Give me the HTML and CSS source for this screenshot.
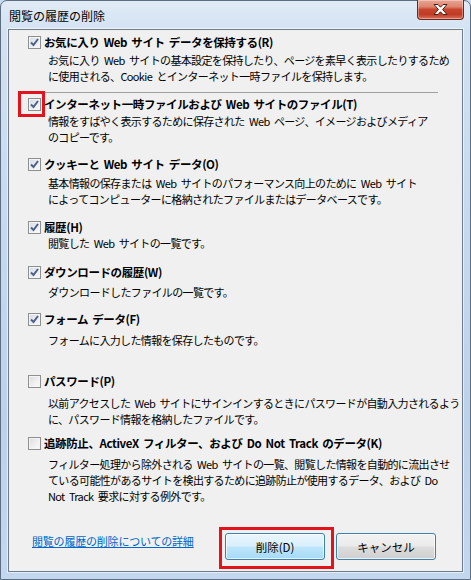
FILE: index.html
```html
<!DOCTYPE html>
<html lang="ja">
<head>
<meta charset="utf-8">
<title>閲覧の履歴の削除</title>
<link rel="stylesheet" href="styles.css">
</head>
<body>
<div class="window">
  <div class="titlebar">
    <span class="title">閲覧の履歴の削除</span>
    <button class="close" aria-label="閉じる">
      <svg width="15" height="11" viewBox="0 0 15 11"><path d="M1 0.5 H5 L7.5 3.2 L10 0.5 H14 L9.6 5.5 L14 10.5 H10 L7.5 7.8 L5 10.5 H1 L5.4 5.5 Z" fill="#ffffff" stroke="#4a1f18" stroke-width="1" stroke-linejoin="round"/></svg>
    </button>
  </div>
  <div class="panel">
    <div class="items">
      <div class="item item-fav">
        <div class="row"><span class="cb checked"><svg width="11" height="11" viewBox="0 0 11 11"><path d="M2 5.5 L4.5 8 L9 2" fill="none" stroke="#4c5f86" stroke-width="2"/></svg></span><span class="label">お気に入り Web サイト データを保持する(R)</span></div>
        <div class="desc desc-fav">お気に入り Web サイトの基本設定を保持したり、ページを素早く表示したりするため<br>に使用される、Cookie とインターネット一時ファイルを保持します。</div>
      </div>
      <div class="separator"></div>
      <div class="item item-temp">
        <div class="row"><span class="cb checked"><svg width="11" height="11" viewBox="0 0 11 11"><path d="M2 5.5 L4.5 8 L9 2" fill="none" stroke="#4c5f86" stroke-width="2"/></svg></span><span class="label">インターネット一時ファイルおよび Web サイトのファイル(T)</span></div>
        <div class="desc desc-temp">情報をすばやく表示するために保存された Web ページ、イメージおよびメディア<br>のコピーです。</div>
      </div>
      <div class="item item-cookie">
        <div class="row"><span class="cb checked"><svg width="11" height="11" viewBox="0 0 11 11"><path d="M2 5.5 L4.5 8 L9 2" fill="none" stroke="#4c5f86" stroke-width="2"/></svg></span><span class="label">クッキーと Web サイト データ(O)</span></div>
        <div class="desc desc-cookie">基本情報の保存または Web サイトのパフォーマンス向上のために Web サイト<br>によってコンピューターに格納されたファイルまたはデータベースです。</div>
      </div>
      <div class="item item-history">
        <div class="row"><span class="cb checked"><svg width="11" height="11" viewBox="0 0 11 11"><path d="M2 5.5 L4.5 8 L9 2" fill="none" stroke="#4c5f86" stroke-width="2"/></svg></span><span class="label">履歴(H)</span></div>
        <div class="desc desc-history">閲覧した Web サイトの一覧です。</div>
      </div>
      <div class="item item-download">
        <div class="row"><span class="cb checked"><svg width="11" height="11" viewBox="0 0 11 11"><path d="M2 5.5 L4.5 8 L9 2" fill="none" stroke="#4c5f86" stroke-width="2"/></svg></span><span class="label">ダウンロードの履歴(W)</span></div>
        <div class="desc desc-download">ダウンロードしたファイルの一覧です。</div>
      </div>
      <div class="item item-form">
        <div class="row"><span class="cb checked"><svg width="11" height="11" viewBox="0 0 11 11"><path d="M2 5.5 L4.5 8 L9 2" fill="none" stroke="#4c5f86" stroke-width="2"/></svg></span><span class="label">フォーム データ(F)</span></div>
        <div class="desc desc-form">フォームに入力した情報を保存したものです。</div>
      </div>
      <div class="item item-password">
        <div class="row"><span class="cb"></span><span class="label">パスワード(P)</span></div>
        <div class="desc desc-password">以前アクセスした Web サイトにサインインするときにパスワードが自動入力されるよう<br>に、パスワード情報を格納したファイルです。</div>
      </div>
      <div class="item item-tracking">
        <div class="row"><span class="cb"></span><span class="label">追跡防止、ActiveX フィルター、および Do Not Track のデータ(K)</span></div>
        <div class="desc desc-tracking">フィルター処理から除外される Web サイトの一覧、閲覧した情報を自動的に流出させ<br>ている可能性があるサイトを検出するために追跡防止が使用するデータ、および Do<br>Not Track 要求に対する例外です。</div>
      </div>
    </div>
    <div class="footer">
      <a class="link" href="#">閲覧の履歴の削除についての詳細</a>
      <div class="buttons">
        <button class="btn btn-primary">削除(D)</button>
        <button class="btn btn-default">キャンセル</button>
      </div>
    </div>
  </div>
  <div class="mark mark-check"></div>
  <div class="mark mark-button"></div>
</div>
</body>
</html>
```
FILE: styles.css
```css
* { box-sizing: border-box; }
html, body { margin: 0; padding: 0; }
body {
  width: 471px;
  height: 580px;
  background: #c9daee;
  font-family: "Noto Sans CJK JP", "Noto Sans", sans-serif;
  color: #000;
}
.window {
  position: relative;
  width: 471px;
  height: 580px;
  padding: 0 7px 7px 7px;
  border: 1px solid #5d6e82;
  border-radius: 7px 7px 0 0;
  background: linear-gradient(180deg, #e1ebf6 0px, #d3e2f2 30px, #c7daef 200px, #bcd2ea 420px, #c3d8ee 580px);
  display: flex;
  flex-direction: column;
}
.titlebar {
  height: 28px;
  display: flex;
  justify-content: space-between;
  align-items: flex-start;
  margin: 0 -1px 0 1px;
}
.title {
  font-size: 12px;
  line-height: 14px;
  margin-top: 8px;
  color: #000;
}
.close {
  width: 47px;
  height: 20px;
  margin-top: -1px;
  padding: 0;
  border: 1px solid #6a2a20;
  border-top: none;
  border-radius: 0 0 4px 4px;
  background: linear-gradient(180deg, #eaa593 0%, #dd8670 35%, #c9452e 50%, #c03a24 75%, #d9705a 100%);
  box-shadow: inset 0 0 0 1px rgba(255,255,255,0.35);
  display: flex;
  align-items: center;
  justify-content: center;
}
.close svg { display: block; }
.panel {
  flex: 1;
  display: flex;
  flex-direction: column;
  border: 1px solid #6f7c8b;
  box-shadow: 0 0 0 1px rgba(255,255,255,0.55);
  background: #f0f0f0;
  padding: 4px 26px 11px 19px;
}
.items { display: flex; flex-direction: column; }
.row {
  display: flex;
  align-items: center;
  height: 16px;
}
.cb {
  width: 13px;
  height: 13px;
  border: 1px solid #8e8f8f;
  background: linear-gradient(135deg, #dcdcdc 0%, #f1f1f1 60%, #fbfbfb 100%);
  box-shadow: inset 0 0 0 1px #f4f4f4;
  flex: none;
  display: flex;
  align-items: center;
  justify-content: center;
}
.cb.checked {
  background: linear-gradient(135deg, #d6dbe6 0%, #eceff5 60%, #f8f9fb 100%);
}
.cb svg { display: block; }
.label {
  margin-left: 3px;
  font-size: 11.5px;
  font-weight: bold;
  letter-spacing: -0.4px;
  word-spacing: 2px;
  line-height: 16px;
  white-space: nowrap;
}
.desc {
  margin-left: 20px;
  font-size: 11px;
  letter-spacing: -0.65px;
  word-spacing: 2.5px;
  line-height: 16px;
  white-space: nowrap;
}
.desc-fav { margin-top: 2px; }
.separator {
  height: 1px;
  margin: 8px 0 0 1px;
  width: 409px;
  background: #a0a0a0;
}
.item-temp { margin-top: 3px; }
.desc-temp { margin-top: 1px; }
.item-cookie { margin-top: 11px; }
.desc-cookie { margin-top: 3px; }
.item-history { margin-top: 12px; }
.desc-history { margin-top: 0; }
.item-download { margin-top: 13px; }
.desc-download { margin-top: 4px; }
.item-form { margin-top: 11px; }
.desc-form { margin-top: 5px; }
.item-password { margin-top: 25px; }
.desc-password { margin-top: 6px; }
.item-tracking { margin-top: 8px; }
.desc-tracking { margin-top: 5px; }
.footer {
  margin-top: auto;
  display: flex;
  justify-content: space-between;
  align-items: flex-start;
}
.link {
  margin-left: 4px;
  font-size: 11px;
  letter-spacing: -0.2px;
  line-height: 16px;
  color: #0066cc;
  text-decoration: underline;
}
.buttons { display: flex; gap: 11px; }
.btn {
  width: 100px;
  height: 27px;
  border: 1px solid #3c7fb1;
  border-radius: 3px;
  font-family: "Noto Sans CJK JP", "Noto Sans", sans-serif;
  font-size: 11.5px;
  color: #000;
  padding: 0;
  box-shadow: inset 0 0 0 1px rgba(255,255,255,0.7);
}
.btn-primary {
  background: linear-gradient(180deg, #eaf6fd 0%, #d9f0fc 48%, #bee6fd 52%, #a7d9f5 100%);
}
.btn-default {
  background: linear-gradient(180deg, #f2f2f2 0%, #ebebeb 48%, #dddddd 52%, #cfcfcf 100%);
}
.mark {
  position: absolute;
  border: 3px solid #e3131b;
}
.mark-check { left: 17px; top: 90px; width: 27px; height: 26px; }
.mark-button { left: 218px; top: 526px; width: 115px; height: 42px; }
```
